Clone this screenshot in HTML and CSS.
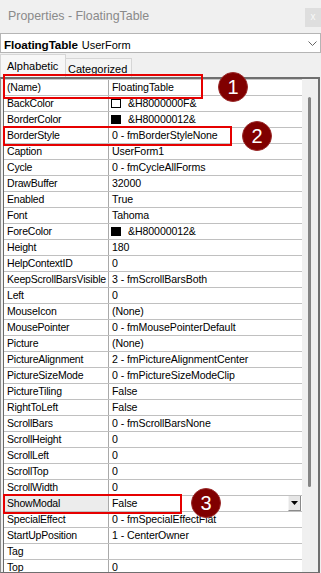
FILE: index.html
```html
<!DOCTYPE html>
<html>
<head>
<meta charset="utf-8">
<link rel="stylesheet" href="styles.css">
</head>
<body>
<div class="titlebar">
  <span class="title">Properties - FloatingTable</span>
  <span class="close">x</span>
</div>
<div class="combo">
  <span class="obj"><b>FloatingTable</b><span class="type">UserForm</span></span>
  <svg class="chev" width="9" height="5" viewBox="0 0 9 5"><path d="M0.5 0.5 L4.5 4.5 L8.5 0.5" fill="none" stroke="#666" stroke-width="1"/></svg>
</div>
<div class="tabs">
  <div class="tab active">Alphabetic</div>
  <div class="tab inactive">Categorized</div>
</div>
<div class="panel">
  <div class="rows">
    <div class="row"><div class="name">(Name)</div><div class="value">FloatingTable</div></div>
    <div class="row"><div class="name">BackColor</div><div class="value"><span class="swatch white"></span>&amp;H8000000F&amp;</div></div>
    <div class="row"><div class="name">BorderColor</div><div class="value"><span class="swatch black"></span>&amp;H80000012&amp;</div></div>
    <div class="row"><div class="name">BorderStyle</div><div class="value">0 - fmBorderStyleNone</div></div>
    <div class="row"><div class="name">Caption</div><div class="value">UserForm1</div></div>
    <div class="row"><div class="name">Cycle</div><div class="value">0 - fmCycleAllForms</div></div>
    <div class="row"><div class="name">DrawBuffer</div><div class="value">32000</div></div>
    <div class="row"><div class="name">Enabled</div><div class="value">True</div></div>
    <div class="row"><div class="name">Font</div><div class="value">Tahoma</div></div>
    <div class="row"><div class="name">ForeColor</div><div class="value"><span class="swatch black"></span>&amp;H80000012&amp;</div></div>
    <div class="row"><div class="name">Height</div><div class="value">180</div></div>
    <div class="row"><div class="name">HelpContextID</div><div class="value">0</div></div>
    <div class="row"><div class="name">KeepScrollBarsVisible</div><div class="value">3 - fmScrollBarsBoth</div></div>
    <div class="row"><div class="name">Left</div><div class="value">0</div></div>
    <div class="row"><div class="name">MouseIcon</div><div class="value">(None)</div></div>
    <div class="row"><div class="name">MousePointer</div><div class="value">0 - fmMousePointerDefault</div></div>
    <div class="row"><div class="name">Picture</div><div class="value">(None)</div></div>
    <div class="row"><div class="name">PictureAlignment</div><div class="value">2 - fmPictureAlignmentCenter</div></div>
    <div class="row"><div class="name">PictureSizeMode</div><div class="value">0 - fmPictureSizeModeClip</div></div>
    <div class="row"><div class="name">PictureTiling</div><div class="value">False</div></div>
    <div class="row"><div class="name">RightToLeft</div><div class="value">False</div></div>
    <div class="row"><div class="name">ScrollBars</div><div class="value">0 - fmScrollBarsNone</div></div>
    <div class="row"><div class="name">ScrollHeight</div><div class="value">0</div></div>
    <div class="row"><div class="name">ScrollLeft</div><div class="value">0</div></div>
    <div class="row"><div class="name">ScrollTop</div><div class="value">0</div></div>
    <div class="row"><div class="name">ScrollWidth</div><div class="value">0</div></div>
    <div class="row selected"><div class="name">ShowModal</div><div class="value">False<span class="dropbtn"><svg width="7" height="4" viewBox="0 0 7 4"><path d="M0 0 H7 L3.5 4 Z" fill="#000"/></svg></span></div></div>
    <div class="row"><div class="name">SpecialEffect</div><div class="value">0 - fmSpecialEffectFlat</div></div>
    <div class="row"><div class="name">StartUpPosition</div><div class="value">1 - CenterOwner</div></div>
    <div class="row"><div class="name">Tag</div><div class="value"></div></div>
    <div class="row"><div class="name">Top</div><div class="value">0</div></div>
  </div>
  <div class="scrollbar"><div class="thumb"></div></div>
</div>

<div class="mark box1"></div>
<div class="mark box2"></div>
<div class="mark box3"></div>
<div class="badge b1">1</div>
<div class="badge b2">2</div>
<div class="badge b3">3</div>
</body>
</html>
```

FILE: styles.css
```css
* { box-sizing: border-box; }
html, body { margin: 0; padding: 0; }
body {
  width: 321px;
  height: 573px;
  overflow: hidden;
  position: relative;
  background: #f0f0f0;
  font-family: "Liberation Sans", Arial, sans-serif;
  color: #000;
}

.titlebar {
  height: 33px;
  display: flex;
  align-items: flex-start;
}
.title {
  margin: 9px 0 0 8px;
  font-size: 12.4px;
  line-height: 15px;
  color: #8a8a8a;
}
.close {
  margin-left: auto;
  margin-top: 8px;
  width: 16px;
  height: 19px;
  background: #dedede;
  color: #f8f8f8;
  font-size: 10px;
  line-height: 18px;
  text-align: center;
}

.combo {
  height: 20px;
  background: #fff;
  border: 1px solid #b5b5b5;
  display: flex;
  align-items: center;
  padding: 2px 0 0 3px;
}
.combo b { font-size: 11.7px; letter-spacing: -0.1px; }
.combo .type { font-size: 11px; margin-left: 4px; }
.chev { margin-left: auto; margin-right: 3px; margin-top: -1px; }

.tabs {
  height: 24px;
  display: flex;
}
.tab {
  font-size: 11px;
  width: 66px;
  border: 1px solid #d6d6d6;
  border-bottom: none;
}
.tab.active {
  margin-top: 1px;
  background: #f7f7f7;
  padding: 5px 0 0 6px;
}
.tab.inactive {
  margin-top: 5px;
  border-left: none;
  background: #f4f4f4;
  padding: 4px 0 0 2px;
}

.panel {
  height: 496px;
  margin-right: 1px;
  display: flex;
  border-top: 2px solid #6f6f6f;
  border-right: 2px solid #6f6f6f;
  border-left: 1px solid #8c8c8c;
  border-bottom: 1px solid #6f6f6f;
  overflow: hidden;
}
.rows {
  flex: 1;
  margin-left: 2px;
  border-left: 1px solid #6a6a6a;
  border-top: 1px solid #c8c8c8;
  background: #fff;
  overflow: hidden;
}
.row {
  height: 16px;
  display: flex;
  border-bottom: 1px solid #c0c0c0;
  font-size: 10.6px;
  line-height: 15px;
  white-space: nowrap;
}
.name {
  width: 105px;
  flex: none;
  border-right: 1px solid #a9a9a9;
  padding-left: 3px;
  font-size: 10.5px;
  letter-spacing: -0.2px;
  overflow: hidden;
}
.value {
  flex: 1;
  padding-left: 3px;
  display: flex;
  align-items: center;
  letter-spacing: -0.1px;
  overflow: hidden;
}
.row.selected .name { background: #ececec; }

.swatch {
  width: 10px;
  height: 9px;
  margin-left: -1px;
  margin-right: 7px;
  border: 1px solid #000;
}
.swatch.white { background: #fff; }
.swatch.black { background: #000; }

.dropbtn {
  margin-left: auto;
  margin-right: 1px;
  margin-top: -1px;
  width: 13px;
  height: 16px;
  background: #e6e6e6;
  border: 1px solid;
  border-color: #f4f4f4 #8a8a8a #8a8a8a #f4f4f4;
  display: flex;
  align-items: center;
  justify-content: center;
}

.scrollbar {
  width: 16px;
  flex: none;
  background: #f0f0f0;
  padding: 18px 0 0 6px;
}
.thumb {
  width: 3px;
  height: 390px;
  background: #858585;
  border-radius: 2px;
}

.mark {
  position: absolute;
  border: 2px solid #e60000;
}
.box1 { left: 3px; top: 74px; width: 200px; height: 25px; }
.box2 { left: 3px; top: 126px; width: 229px; height: 20px; }
.box3 { left: 3px; top: 494px; width: 179px; height: 20px; }

.badge {
  position: absolute;
  width: 30px;
  height: 30px;
  border-radius: 50%;
  background: #800000;
  border: 1px solid #9a2a2a;
  color: #fff;
  font-size: 20px;
  line-height: 28px;
  text-align: center;
}
.b1 { left: 218px; top: 72px; }
.b2 { left: 242px; top: 121px; }
.b3 { left: 191px; top: 488px; }
```
